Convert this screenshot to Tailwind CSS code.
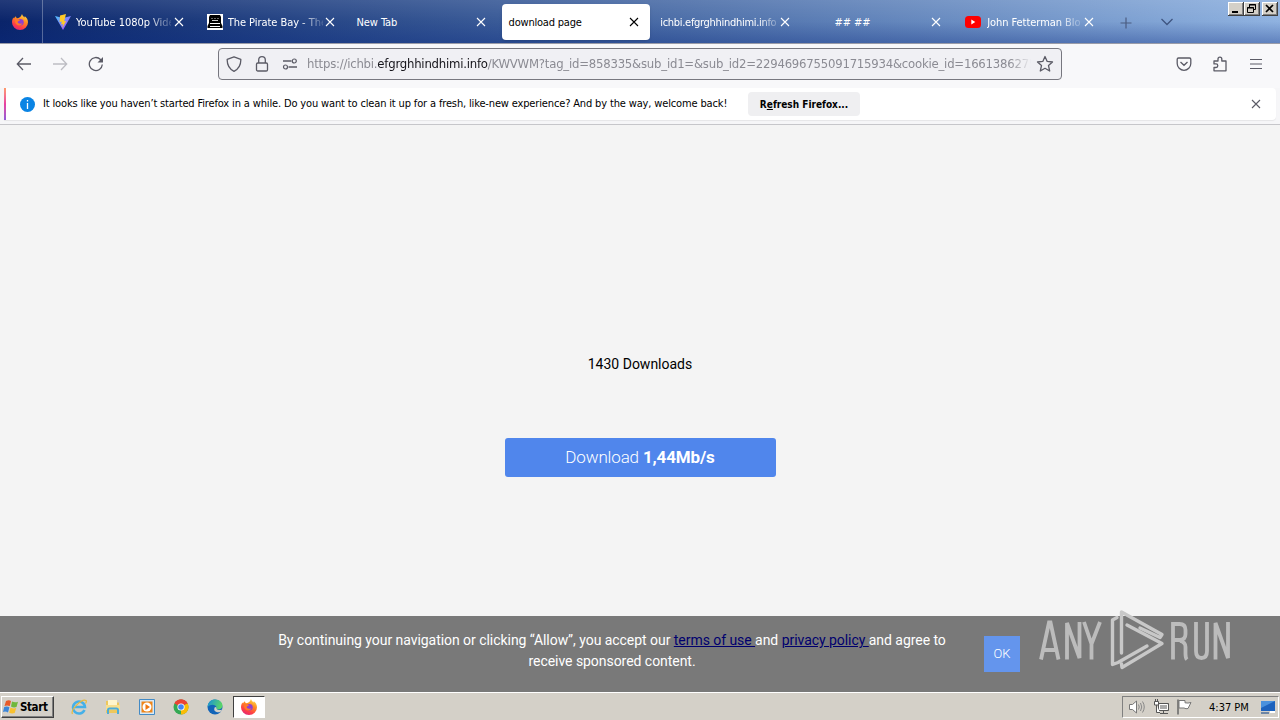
<!DOCTYPE html>
<html lang="en">
<head>
    <meta charset="UTF-8">
    <meta name="viewport" content="width=device-width, initial-scale=1.0">
    <title>download page</title>
    <script src="https://cdn.jsdelivr.net/npm/@tailwindcss/browser@4"></script>
</head>
<body class="w-[1280px] h-[720px] overflow-hidden flex flex-col bg-[#f4f4f4] font-['DejaVu_Sans_Condensed','DejaVu_Sans',sans-serif] text-[11px] text-black">
    <!-- Shared icons -->
    <svg class="absolute w-0 h-0">
        <symbol id="close" viewBox="0 0 10 10"><path d="M1 1l8 8M9 1L1 9" fill="none" stroke="currentColor" stroke-width="1.1"/></symbol>
        <linearGradient id="fire" x1="0.8" y1="0" x2="0.3" y2="1"><stop offset="0" stop-color="#ffe14a"/><stop offset=".4" stop-color="#ff8a20"/><stop offset=".75" stop-color="#ff3f45"/><stop offset="1" stop-color="#e02778"/></linearGradient>
        <symbol id="firefox" viewBox="0 0 16 16">
            <path d="M10 0c.3 1.6 1.6 2.3 2.6 3.4.2-.5.1-1 0-1.4C14.500 3.300 16 5.600 16 8.300A8 7.700 0 0 1 0 8.300c0-2 .7-3.700 1.500-4.700l.4 1c.5-1 1.100-1.800 2-2.300 0 .8.4 1.500 1 1.900C7 4 9 3 10 0z" fill="url(#fire)"/>
            <circle cx="8.400" cy="8.300" r="3.300" fill="#8f3fd0"/>
            <path d="M3.500 5.500c1.500-.9 3-.4 4.500.8-.5 1-2 .7-2.400 1.800.4 1.800 3 2.300 4.800.8-.5 3-5.500 3.600-7 .1-.5-1.200-.4-2.500.1-3.500z" fill="#ff7a28"/>
        </symbol>
    </svg>

    <!-- Tab strip -->
    <div class="relative h-[43px] shrink-0 flex bg-linear-to-r from-[#0a246a] to-[#8fb2e0] text-white">
        <div class="absolute inset-0 bg-linear-to-b from-white/10 via-transparent to-[#0a2a80]/35"></div>
        <div class="relative w-[42px] border-r border-white/30 flex items-center justify-center box-content">
            <svg class="w-4 h-4 -ml-0.5"><use href="#firefox"/></svg>
        </div>
        <div class="relative flex ml-[2px] tracking-[-0.05px]">
            <div class="w-[151.7px] h-[43px] pl-[10px] flex items-center">
                <svg class="w-4 h-4 mr-[5px] shrink-0" viewBox="0 0 16 16"><linearGradient id="vt" x1="0" y1="0" x2="1" y2="1"><stop offset="0" stop-color="#4cc5ff"/><stop offset="1" stop-color="#b33eff"/></linearGradient><path d="M0 2l8 14 8-14-8 2z" fill="url(#vt)"/><path d="M11 0L5 1.500 4.600 8l2.200-.4-.7 3L8 10l-.8 4 4-7-2 .3z" fill="#ffc928"/></svg>
                <div class="w-[95px] overflow-hidden whitespace-nowrap mask-r-from-75% mask-r-to-105% mt-[3px]">YouTube 1080p Vide</div>
                <svg class="w-2.5 h-2.5 ml-[3px] shrink-0"><use href="#close"/></svg>
            </div>
            <div class="w-[151.7px] h-[43px] pl-[10px] flex items-center">
                <svg class="w-4 h-4 mr-[5px] shrink-0" viewBox="0 0 16 16"><path d="M0 0h16v16H0z" fill="#fff"/><path d="M3 1h10l1 2v6l1.500 3v2H.5v-2L2 9V3z" fill="#000"/><path d="M3 9.500h10M3 12.500h10" stroke="#fff"/><path d="M4.500 4.500h1m2 0h1m2 0h1M5 6.500h6" stroke="#ccc"/></svg>
                <div class="w-[95px] overflow-hidden whitespace-nowrap mask-r-from-75% mask-r-to-105% mt-[3px]">The Pirate Bay - The</div>
                <svg class="w-2.5 h-2.5 ml-[2px] shrink-0"><use href="#close"/></svg>
            </div>
            <div class="w-[151.7px] h-[43px] pl-[8px] flex items-center">
                <div class="w-[120px] mt-[3px]">New Tab</div>
                <svg class="w-2.5 h-2.5 shrink-0"><use href="#close"/></svg>
            </div>
            <div class="w-[151.7px] h-[43px] pl-[1.5px] pt-1">
                <div class="w-[148px] h-9 rounded bg-white text-black pl-[7px] flex items-center shadow-sm">
                    <div class="w-[120px] mt-[3px] tracking-[-0.2px]">download page</div>
                    <svg class="w-2.5 h-2.5 shrink-0"><use href="#close"/></svg>
                </div>
            </div>
            <div class="w-[151.7px] h-[43px] pl-[8.500px] flex items-center">
                <div class="w-[117px] mr-[3px] overflow-hidden whitespace-nowrap tracking-[-0.3px] mask-r-from-85% mask-r-to-105% mt-[3px]">ichbi.efgrghhindhimi.info</div>
                <svg class="w-2.5 h-2.5 shrink-0"><use href="#close"/></svg>
            </div>
            <div class="w-[151.7px] h-[43px] pl-[31px] flex items-center">
                <div class="w-[97px] mt-[3px]">## ##</div>
                <svg class="w-2.5 h-2.5 shrink-0"><use href="#close"/></svg>
            </div>
            <div class="w-[151.7px] h-[43px] pl-[10px] flex items-center">
                <svg class="w-4 h-4 mr-[6px] shrink-0" viewBox="0 0 16 16"><rect y="2" width="16" height="12" rx="3.500" fill="#f00"/><path d="M6.300 5.500v5l4-2.500z" fill="#fff"/></svg>
                <div class="w-[95px] overflow-hidden whitespace-nowrap mask-r-from-75% mask-r-to-105% mt-[3px]">John Fetterman Blo</div>
                <svg class="w-2.5 h-2.5 ml-[2px] shrink-0"><use href="#close"/></svg>
            </div>
        </div>
        <svg class="relative w-3 h-3 mt-[17px] ml-[13px] text-[#4b5c80]" viewBox="0 0 12 12"><path d="M6 .5v11M.5 6h11" stroke="currentColor" stroke-width="1.200"/></svg>
        <svg class="relative w-3 h-3 mt-[16px] ml-[29px] text-[#3f5580]" viewBox="0 0 12 12"><path d="M.5 3L6 8.500 11.500 3" fill="none" stroke="currentColor" stroke-width="1.300"/></svg>
        <!-- Window buttons -->
        <div class="absolute left-[1228px] top-[2px] flex text-black">
            <svg class="w-4 h-[14px]" viewBox="0 0 16 14"><path d="M0 0h16v14H0z" fill="#404040"/><path d="M0 0h15v13H0z" fill="#fff"/><path d="M1 1h14v12H1z" fill="#808080"/><path d="M1 1h13v11H1z" fill="#d4d0c8"/><path d="M4 9h6v2H4z"/></svg>
            <svg class="w-4 h-[14px]" viewBox="0 0 16 14"><path d="M0 0h16v14H0z" fill="#404040"/><path d="M0 0h15v13H0z" fill="#fff"/><path d="M1 1h14v12H1z" fill="#808080"/><path d="M1 1h13v11H1z" fill="#d4d0c8"/><path d="M5.500 5V2.500h6v5H10M5 3h7M3.500 5.500h6v5h-6zM3 6h7" fill="none" stroke="#000"/></svg>
            <svg class="w-4 h-[14px] ml-[2px]" viewBox="0 0 16 14"><path d="M0 0h16v14H0z" fill="#404040"/><path d="M0 0h15v13H0z" fill="#fff"/><path d="M1 1h14v12H1z" fill="#808080"/><path d="M1 1h13v11H1z" fill="#d4d0c8"/><path d="M4 3l7 7M11 3l-7 7" stroke="#000" stroke-width="1.700"/></svg>
        </div>
    </div>

    <!-- Navigation toolbar -->
    <div class="h-[45px] shrink-0 bg-[#f8f8fa] border-t border-[#9a9ca8] pb-1 flex items-center text-[#5b5b66]">
        <svg class="w-4 h-4 ml-4" viewBox="0 0 16 16"><path d="M15 8H1.500M7 2L1.300 8 7 14" fill="none" stroke="currentColor" stroke-width="1.300"/></svg>
        <svg class="w-4 h-4 ml-5 text-[#bdbdc3]" viewBox="0 0 16 16"><path d="M1 8h13.500M9 2l5.700 6L9 14" fill="none" stroke="currentColor" stroke-width="1.300"/></svg>
        <svg class="w-4 h-4 ml-5" viewBox="0 0 16 16"><path d="M14.300 8.500A6.500 6.500 0 1 1 12.500 3.500L14 5" fill="none" stroke="currentColor" stroke-width="1.300"/><path d="M15 1v5.500H9.500z" fill="currentColor"/></svg>
        <div class="w-[844px] h-8 ml-[114px] border border-[#77777f] rounded bg-[#f0f0f4] flex items-center">
            <svg class="w-4 h-4 ml-[7px]" viewBox="0 0 16 16"><path d="M8 .8L14.800 3.300C15 9 12.500 13 8 15.300 3.500 13 1 9 1.200 3.300z" fill="none" stroke="currentColor" stroke-width="1.300" stroke-linejoin="round"/></svg>
            <svg class="w-4 h-4 ml-3" viewBox="0 0 16 16"><rect x="2.500" y="7" width="11" height="8" rx="1.300" fill="none" stroke="currentColor" stroke-width="1.300"/><path d="M4.700 7V4a3.300 3.300 0 0 1 6.600 0v3" fill="none" stroke="currentColor" stroke-width="1.300"/></svg>
            <svg class="w-4 h-4 ml-3" viewBox="0 0 16 16"><path d="M1 5h8.500M6.500 11H15" stroke="currentColor" stroke-width="1.300"/><circle cx="12.300" cy="5" r="2" fill="none" stroke="currentColor" stroke-width="1.200"/><circle cx="3.500" cy="11" r="2" fill="none" stroke="currentColor" stroke-width="1.200"/></svg>
            <div class="w-[724px] ml-[9px] overflow-hidden whitespace-nowrap text-[13px] tracking-[-0.22px] text-[#8b8b93] mask-r-from-97% mask-r-to-100%">https://ichbi.<span class="text-[#15141a]">efgrghhindhimi.info</span>/KWVWM?tag_id=858335&amp;sub_id1=&amp;sub_id2=2294696755091715934&amp;cookie_id=1661386275</div>
            <svg class="w-[18px] h-[18px] ml-[5px]" viewBox="0 0 18 18"><path d="M9 1.500l2.200 4.900 5.300.6-4 3.600 1.200 5.400L9 13.300 4.300 16l1.200-5.400-4-3.600 5.300-.6z" fill="none" stroke="currentColor" stroke-width="1.300" stroke-linejoin="round"/></svg>
        </div>
        <svg class="w-4 h-4 ml-[114px]" viewBox="0 0 16 16"><path d="M2.500 2h11c.8 0 1.300.5 1.300 1.300V7.500a6.800 6.800 0 0 1-13.600 0V3.300C1.200 2.500 1.700 2 2.500 2zM4.500 6L8 9.300 11.500 6" fill="none" stroke="currentColor" stroke-width="1.300"/></svg>
        <svg class="w-4 h-4 ml-5" viewBox="0 0 16 16"><path d="M2 5h4V3a1.900 1.900 0 0 1 3.800 0v2h4.200v9.800H2V11.500h2a1.800 1.800 0 0 0 0-3.600H2z" fill="none" stroke="currentColor" stroke-width="1.300" stroke-linejoin="round"/></svg>
        <svg class="w-4 h-4 ml-5" viewBox="0 0 16 16"><path d="M2 3.500h12M2 8h12M2 12.500h12" stroke="currentColor" stroke-width="1.200"/></svg>
    </div>

    <!-- Notification bar -->
    <div class="h-[37px] shrink-0 bg-[#f6f6f8] border-b border-[#c6c6ca] px-1">
        <div class="h-8 bg-white rounded-r flex items-center shadow-[0_1px_1px_#0001]">
            <div class="w-0.5 h-8 bg-linear-to-b from-[#ff9a6b] via-[#e83fa0] to-[#9059d8]"></div>
            <svg class="w-[15px] h-[15px] ml-[14px]" viewBox="0 0 15 15"><circle cx="7.500" cy="7.500" r="7.500" fill="#0a84e4"/><path d="M7.500 3v1.500M7.500 6v6" stroke="#fff" stroke-width="1.300"/></svg>
            <div class="w-[705px] ml-2 whitespace-nowrap tracking-[-0.147px]">It looks like you haven’t started Firefox in a while. Do you want to clean it up for a fresh, like-new experience? And by the way, welcome back!</div>
            <div class="w-28 h-6 rounded bg-[#efeff1] flex items-center justify-center font-bold whitespace-nowrap text-[10px]"><span>R<span class="underline">e</span>fresh Firefox...</span></div>
            <svg class="w-2.5 h-2.5 ml-[391px] text-[#5b5b66]"><use href="#close"/></svg>
        </div>
    </div>

    <!-- Page -->
    <div class="h-[491px] shrink-0 flex flex-col items-center font-[Roboto,sans-serif]">
        <div class="mt-[229px] h-5 leading-5 text-[14px]">1430 Downloads</div>
        <div class="mt-16 w-[271px] h-[39px] rounded-[3px] bg-[#5086ec] text-white text-[17px] tracking-[-0.15px] font-light flex items-center justify-center"><span>Download <b class="font-bold">1,44Mb/s</b></span></div>
    </div>
    <div class="relative h-[76px] shrink-0 bg-[#797979] text-white font-[Roboto,sans-serif]">
        <div class="flex pl-[262px] pt-[14px]">
            <div class="w-[700px] text-center text-[14px] leading-[21px] tracking-[-0.045px] whitespace-nowrap">By continuing your navigation or clicking “Allow”, you accept our <span class="underline text-[#00006e]">terms of use </span>and <span class="underline text-[#00006e]">privacy policy </span>and agree to<br>receive sponsored content.</div>
            <div class="w-9 h-9 mt-[6px] ml-[22px] bg-[#6495ed] text-[13px] font-light flex items-center justify-center">OK</div>
        </div>
        <!-- Watermark -->
        <svg class="absolute left-[1030px] -top-2 w-[210px] h-[66px]" viewBox="0 0 210 66">
            <g fill="none" stroke="#bcbcbc" stroke-width="3.800">
                <path d="M11 51.500L19 14.500h1.500L28.500 51.500M14 42h12M37 51.500V15L49.500 50V14M54 14l7.500 22v15.500M61.500 36L70 14"/>
                <path d="M143 51.500V16h6.500q6 0 6 6v4q0 6-6 6H143M150 33q5.500 1 5.500 6v7q0 4 1.500 5.500M166 14v29q0 7 5.500 7t5.500-7V14M185.500 51.500V15L198 50V14"/>
            </g>
            <g fill="none" stroke="#c8c8c8" stroke-width="3.400" stroke-linejoin="round" stroke-linecap="round">
                <path d="M87 9.500L82.500 12v44.500L88 54.500 117 38"/>
                <path d="M91.500 45V4L132 26.500 130 29.500 110 20"/>
                <path d="M97 17L132 35.500 92 59.500 91.500 56"/>
            </g>
        </svg>
    </div>

    <!-- Taskbar -->
    <div class="h-7 shrink-0 bg-[#d4d0c8] border-t border-white flex items-center pt-px">
        <div class="w-[53px] h-[22px] ml-px border border-white border-r-[#404040] border-b-[#404040] shadow-[inset_-1px_-1px_#808080] flex items-center font-bold text-[11.500px] tracking-[-0.4px]">
            <svg class="w-4 h-4 ml-px mr-px shrink-0" viewBox="0 0 16 16"><path d="M3 2q3-1.500 5 0L6.800 7Q4 5.800 1.500 7z" fill="#e85a28"/><path d="M9 2.500q3 1.500 6 .2L13.500 8q-3 1-5.500-.5z" fill="#70b83c"/><path d="M1.200 8q3-1 5.200.3L5 13.500Q2.500 12 0 13z" fill="#3c86d8"/><path d="M7.500 8.500q3 1.500 5.700.5l-1.500 5q-3 1-5.500-.3z" fill="#f8c130"/></svg>
            <span class="pt-px">Start</span>
        </div>
        <svg class="w-4 h-4 ml-[17px]" viewBox="0 0 16 16"><path d="M13.500 11A6 6 0 1 1 14 8H4" fill="none" stroke="#45b0e8" stroke-width="2.500"/><path d="M1.500 15C-1 11 11-1 15 1.500c.7.800.2 2-.5 3" fill="none" stroke="#e8b93c" stroke-width="1.200"/></svg>
        <svg class="w-4 h-4 ml-[18px]" viewBox="0 0 16 16"><path d="M1 2h5l1 1.500h7V14H1z" fill="#edc75c"/><path d="M3 1h9v5H3z" fill="#fff5cc"/><path d="M1 6h14v5H1z" fill="#f7de8d"/><path d="M3 15v-4q0-1.500 1.500-1.500h7Q13 9.500 13 11v4" fill="none" stroke="#4cacd9" stroke-width="2"/></svg>
        <svg class="w-4 h-4 ml-[18px]" viewBox="0 0 16 16"><path d="M.5.500h15v15H.5z" fill="#d7e9f7" stroke="#438ac5"/><path d="M2.500 2.500h11v11h-11z" fill="#ef8519"/><circle cx="8" cy="8" r="4.500" fill="#fff"/><path d="M6.500 5v6L11 8z" fill="#ef7610"/></svg>
        <svg class="w-4 h-4 ml-[18px]" viewBox="0 0 16 16"><circle cx="8" cy="8" r="7.500" fill="#34a853"/><path d="M8 8L1.500 4.200A7.500 7.500 0 0 1 14.500 4.200z" fill="#ea4335"/><path d="M8 8l6.500-3.800A7.500 7.500 0 0 1 8 15.500z" fill="#fbbc05"/><path d="M1.500 4.200L8 8V4.500h6.600A7.500 7.500 0 0 0 1.500 4.200z" fill="#ea4335"/><circle cx="8" cy="8" r="3.600" fill="#fff"/><circle cx="8" cy="8" r="2.800" fill="#4285f4"/></svg>
        <svg class="w-4 h-4 ml-[18px]" viewBox="0 0 16 16"><linearGradient id="edge" x1="0" y1="0" x2="1" y2=".3"><stop offset="0" stop-color="#168edb"/><stop offset="1" stop-color="#5ad46a"/></linearGradient><circle cx="8" cy="8" r="7.500" fill="#1264b8"/><path d="M.5 8C1 3 4 .5 8 .5c4.500 0 7.500 3 7.500 6 0 2.500-2 4-4.500 4-1.500 0-2.500-.5-1.500-2C9 5.500 4 4.500.5 8z" fill="url(#edge)"/><path d="M9.500 8.500c-1 2 2.500 3.500 5.500 2 0 1-1 2-2 2.700C8 14 6 11 8 8z" fill="#d4d0c8"/></svg>
        <div class="w-8 h-[22px] ml-[10px] bg-white border border-[#404040] border-r-white border-b-white flex items-center justify-center"><svg class="w-4 h-4"><use href="#firefox"/></svg></div>
        <!-- Tray -->
        <div class="w-[157px] h-[22px] ml-auto mr-[1px] border border-[#808080] border-r-white border-b-white flex items-center">
            <svg class="w-[18px] h-4 ml-[5px]" viewBox="0 0 18 16"><path d="M1.500 5.500h3L8.500 2v12L4.500 10.500h-3z" fill="#fff" stroke="#777"/><path d="M10.500 5.500q1.500 2.500 0 5M12.500 4q2.500 4 0 8M14.500 2.500q3.500 5.500 0 11" fill="none" stroke="#888"/></svg>
            <svg class="w-4 h-4 ml-[7px]" viewBox="0 0 16 16"><path d="M5.500 4.500h10v7h-10z" fill="#aaa" stroke="#555"/><path d="M6.500 5.500h8v5h-8z" fill="none" stroke="#fff"/><path d="M7 14.500h8M10.500 12v2" stroke="#555"/><path d="M1.500 2.500h4V6h-4zM3.500 6v7.500H7M2.500 0v2M4.500 0v2" fill="#fff" stroke="#555"/></svg>
            <svg class="w-4 h-4 ml-[7px]" viewBox="0 0 16 16"><path d="M2 .5v15" stroke="#666" stroke-width="1.500"/><path d="M3 1.500h6v2.300q3 .7 6-.3l-3 6q-2 .7-4-.5H3z" fill="#fff" stroke="#777"/></svg>
            <div class="w-[42px] ml-[17px] pt-0.5 whitespace-nowrap">4:37 PM</div>
            <svg class="w-4 h-4 ml-[9px]" viewBox="0 0 16 16"><path d="M1 2h14v10H1z" fill="#1d62bd"/><path d="M1 2h14L1 9z" fill="#4a91dd"/><path d="M1 13h8v2H1z" fill="#6d86a5"/><path d="M10 12h5v2h-5z" fill="#fff"/></svg>
        </div>
    </div>
</body>
</html>
